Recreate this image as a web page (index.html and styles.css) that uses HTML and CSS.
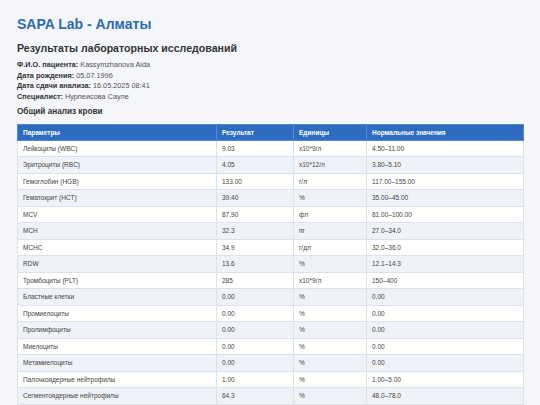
FILE: index.html
```html
<!DOCTYPE html>
<html lang="ru">
<head>
<meta charset="utf-8">
<title>SAPA Lab - Алматы</title>
<link rel="stylesheet" href="styles.css">
</head>
<body>
<div class="page">
  <h1 class="title">SAPA Lab - Алматы</h1>
  <h2 class="subtitle">Результаты лабораторных исследований</h2>
  <div class="info">
    <div class="info-line"><b>Ф.И.О. пациента:</b> Kassymzhanova Aida</div>
    <div class="info-line"><b>Дата рождения:</b> 05.07.1996</div>
    <div class="info-line"><b>Дата сдачи анализа:</b> 16.05.2025 08:41</div>
    <div class="info-line"><b>Специалист:</b> Нурпеисова Сауле</div>
  </div>
  <h3 class="section">Общий анализ крови</h3>
  <table class="results">
    <colgroup>
      <col class="c-param"><col class="c-res"><col class="c-unit"><col class="c-norm">
    </colgroup>
    <thead>
      <tr><th>Параметры</th><th>Результат</th><th>Единицы</th><th>Нормальные значения</th></tr>
    </thead>
    <tbody>
      <tr><td>Лейкоциты (WBC)</td><td>9.03</td><td>x10*9/л</td><td>4.50–11.00</td></tr>
      <tr><td>Эритроциты (RBC)</td><td>4.05</td><td>x10*12/л</td><td>3.80–5.10</td></tr>
      <tr><td>Гемоглобин (HGB)</td><td>133.00</td><td>г/л</td><td>117.00–155.00</td></tr>
      <tr><td>Гематокрит (HCT)</td><td>39.40</td><td>%</td><td>35.00–45.00</td></tr>
      <tr><td>MCV</td><td>87.90</td><td>фл</td><td>81.00–100.00</td></tr>
      <tr><td>MCH</td><td>32.3</td><td>пг</td><td>27.0–34.0</td></tr>
      <tr><td>MCHC</td><td>34.9</td><td>г/дл</td><td>32.0–36.0</td></tr>
      <tr><td>RDW</td><td>13.6</td><td>%</td><td>12.1–14.3</td></tr>
      <tr><td>Тромбоциты (PLT)</td><td>285</td><td>x10*9/л</td><td>150–400</td></tr>
      <tr><td>Бластные клетки</td><td>0.00</td><td>%</td><td>0.00</td></tr>
      <tr><td>Промиелоциты</td><td>0.00</td><td>%</td><td>0.00</td></tr>
      <tr><td>Пролимфоциты</td><td>0.00</td><td>%</td><td>0.00</td></tr>
      <tr><td>Миелоциты</td><td>0.00</td><td>%</td><td>0.00</td></tr>
      <tr><td>Метамиелоциты</td><td>0.00</td><td>%</td><td>0.00</td></tr>
      <tr><td>Палочкоядерные нейтрофилы</td><td>1.00</td><td>%</td><td>1.00–5.00</td></tr>
      <tr><td>Сегментоядерные нейтрофилы</td><td>64.3</td><td>%</td><td>48.0–78.0</td></tr>
    </tbody>
  </table>
</div>
</body>
</html>
```

FILE: styles.css
```css
html, body {
  margin: 0;
  padding: 0;
  background: #f4f6fa;
}
body {
  font-family: "Liberation Sans", Arial, sans-serif;
  color: #333;
}
.page {
  padding: 15px 17px 0 17px;
  width: 506px;
}
.title {
  margin: 0;
  font-size: 14px;
  line-height: 18px;
  font-weight: bold;
  color: #2b6cb0;
}
.subtitle {
  margin: 8px 0 0 0;
  font-size: 10.6px;
  line-height: 14px;
  font-weight: bold;
  color: #333;
}
.info {
  margin-top: 5px;
}
.info-line {
  font-size: 7.3px;
  line-height: 10.7px;
  color: #555;
}
.info-line b {
  color: #333;
}
.section {
  margin: 3px 0 0 0;
  font-size: 8.2px;
  line-height: 12px;
  font-weight: bold;
  color: #333;
}
.results {
  margin-top: 6px;
  width: 506px;
  border-collapse: collapse;
  table-layout: fixed;
  background: #fff;
  font-size: 6.5px;
}
.c-param { width: 199px; }
.c-res { width: 77px; }
.c-unit { width: 73px; }
.c-norm { width: 157px; }
.results th {
  background: #2d6cc0;
  color: #fff;
  font-weight: bold;
  text-align: left;
  padding: 4px 5px;
  line-height: 7px;
  border: 1px solid #5588cc;
}
.results td {
  padding: 4px 5px;
  line-height: 7.5px;
  border: 1px solid #dde2ea;
  color: #444;
}
.results tbody tr:nth-child(even) td {
  background: #eff2f8;
}
```
